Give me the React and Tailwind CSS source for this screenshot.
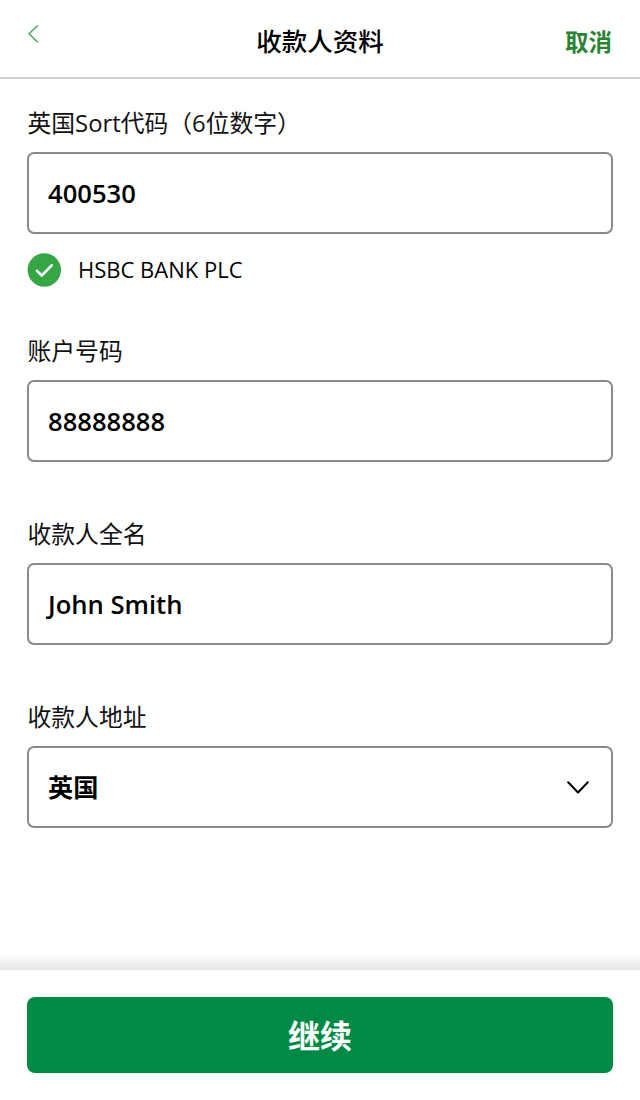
import { useState } from "react";

const INITIAL = {
  sortCode: "400530",
  account: "88888888",
  name: "John Smith",
};

function Field({ label, className = "", children }) {
  return (
    <div className={className}>
      <label className="block h-9 mb-[11px] pl-[0.5px] text-[23.8px] leading-[37px] text-[#111] whitespace-nowrap">
        {label}
      </label>
      {children}
    </div>
  );
}

function TextInput({ value, onChange }) {
  return (
    <input
      value={value}
      onChange={(e) => onChange(e.target.value)}
      className="block w-full h-[82px] px-2 indent-[11px] rounded-[7px] border-2 border-[#8a8a8a] bg-white text-[25.6px] font-semibold text-black outline-none"
    />
  );
}

export default function App() {
  const [form, setForm] = useState(INITIAL);
  const update = (key) => (value) => setForm({ ...form, [key]: value });

  return (
    <div className="flex flex-col h-[1100px] w-[640px] overflow-hidden bg-white font-['Open_Sans','Noto_Sans_CJK_SC',sans-serif]">
      {/* Header */}
      <header className="grid grid-cols-3 items-center h-[79px] px-7 border-b-2 border-[#d0d0d0]">
        <button className="justify-self-start pb-[10px]" aria-label="返回">
          <svg width="12" height="20" viewBox="0 0 12 20" fill="none" stroke="#3daa4c" strokeWidth="1.4">
            <path d="M9.8 1.4 1 9.8l8.8 8.4" />
          </svg>
        </button>
        <h1 className="justify-self-center pt-0.5 text-[25.5px] leading-9 font-medium font-['Noto_Sans_CJK_SC',sans-serif] text-black whitespace-nowrap">
          收款人资料
        </h1>
        <button className="justify-self-end pt-[7px] text-[23.5px] leading-9 font-bold text-[#2a8434]">
          取消
        </button>
      </header>

      {/* Form */}
      <main className="flex-1 px-[27px] pt-[26px]">
        <Field label="英国Sort代码（6位数字）">
          <TextInput value={form.sortCode} onChange={update("sortCode")} />
          <div className="flex items-center gap-[17px] mt-[19px] h-[34px]">
            <svg width="34" height="34" viewBox="0 0 34 34" fill="none">
              <circle cx="17.3" cy="17" r="16.7" fill="#35a546" />
              <path
                d="M10 17.8l4.7 4.7 10-10.2"
                stroke="#fff"
                strokeWidth="2.6"
                strokeLinecap="round"
                strokeLinejoin="round"
              />
            </svg>
            <span className="pb-0.5 text-[22px] leading-none text-black">HSBC BANK PLC</span>
          </div>
        </Field>

        <Field label="账户号码" className="mt-[46px]">
          <TextInput value={form.account} onChange={update("account")} />
        </Field>

        <Field label="收款人全名" className="mt-[54px]">
          <TextInput value={form.name} onChange={update("name")} />
        </Field>

        <Field label="收款人地址" className="mt-[54px]">
          <button className="flex items-center justify-between w-full h-[82px] pl-[19px] pr-[22px] rounded-[7px] border-2 border-[#8a8a8a] bg-white text-[25.2px] font-bold text-black">
            <span className="pt-0.5">英国</span>
            <svg width="22" height="13" viewBox="0 0 22 13" fill="none" stroke="#000" strokeWidth="2" strokeLinecap="round" strokeLinejoin="round">
              <path d="M1.2 1.2 11 11.5l9.8-10.3" />
            </svg>
          </button>
        </Field>
      </main>

      {/* Bottom action */}
      <div className="h-4 bg-linear-to-b from-white to-[#e5e5e5]" />
      <footer className="h-[130px] px-[27px] pt-[27px] bg-white">
        <button className="w-full h-[76px] pt-0.5 rounded-lg bg-[#008a45] text-[32px] font-bold text-white">
          继续
        </button>
      </footer>
    </div>
  );
}
